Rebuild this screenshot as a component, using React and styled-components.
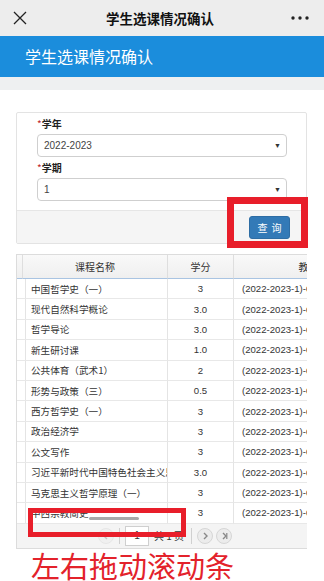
import React from 'react';
import styled, { createGlobalStyle } from 'styled-components';

const GlobalStyle = createGlobalStyle`
  html, body {
    margin: 0;
    padding: 0;
    background: #ffffff;
  }
  body {
    font-family: "Liberation Sans", "Noto Sans CJK SC", sans-serif;
    width: 324px;
    height: 581px;
    overflow: hidden;
  }
  * { box-sizing: border-box; }
`;

const TopBar = styled.div`
  height: 36px;
  background: #ededed;
  display: flex;
  align-items: center;
  justify-content: space-between;
  padding: 0 14px 0 10px;
`;

const TopTitle = styled.div`
  font-size: 13.5px;
  font-weight: bold;
  color: #111;
  font-family: "Noto Sans CJK SC", sans-serif;
`;

const IconBox = styled.div`
  width: 20px;
  height: 20px;
  display: flex;
  align-items: center;
  justify-content: center;
`;

const Banner = styled.div`
  height: 41px;
  background: #1b8ddc;
  color: #fff;
  font-size: 16px;
  font-family: "Noto Sans CJK SC", sans-serif;
  display: flex;
  align-items: center;
  padding-left: 25px;
  padding-bottom: 1px;
`;

const Strip = styled.div`
  height: 13px;
  background: #eef0f1;
`;

const Content = styled.div`
  padding: 22px 17px 0 16px;
`;

const Card = styled.div`
  position: relative;
  border: 1px solid #e3e3e3;
  border-radius: 2px;
`;

const CardBody = styled.div`
  padding: 0 19px 9px 20px;
  display: flex;
  flex-direction: column;
`;

const Label = styled.div`
  font-size: 10px;
  font-weight: bold;
  color: #222;
  height: 21px;
  line-height: 21px;
  font-family: "Noto Sans CJK SC", sans-serif;
`;

const Star = styled.span`
  color: #c0262c;
  font-weight: normal;
`;

const Select = styled.div`
  height: 23px;
  border: 1px solid #cfcfcf;
  border-radius: 4px;
  display: flex;
  align-items: center;
  justify-content: space-between;
  padding: 0 5px 0 6px;
  font-size: 10px;
  color: #444;
`;

const Arrow = styled.span`
  font-size: 7px;
  color: #333;
`;

const CardFooter = styled.div`
  height: 33px;
  background: #f5f5f5;
  border-top: 1px solid #e6e6e6;
  display: flex;
  align-items: center;
  justify-content: flex-end;
  padding-right: 16px;
`;

const QueryButton = styled.button`
  width: 41px;
  height: 23px;
  background: #337ab7;
  border: 1px solid #2e6da4;
  border-radius: 3px;
  color: #fff;
  font-size: 10px;
  letter-spacing: 4px;
  padding: 0 0 0 4px;
  font-family: "Noto Sans CJK SC", sans-serif;
`;

const Mark = styled.div`
  position: absolute;
  border: ${({ $w }) => $w}px solid #e81e2a;
  pointer-events: none;
`;

const Panel = styled.div`
  position: relative;
  margin-top: 10px;
  border: 1px solid #dcdcdc;
  border-right: none;
  overflow: hidden;
`;

const Grid = styled.div`
  display: grid;
  grid-template-columns: 6px 145px 66px 160px;
  width: 377px;
`;

const Head = styled.div`
  height: 24px;
  background: linear-gradient(#f9f9f9, #efefef);
  border-right: 1px solid #dedede;
  border-bottom: 1px solid #a9c4e2;
  display: flex;
  align-items: center;
  justify-content: center;
  font-size: 10px;
  color: #333;
  font-family: "Noto Sans CJK SC", sans-serif;
  white-space: nowrap;
`;

const Cell = styled.div`
  height: 20.4px;
  border-right: 1px solid #e4e4e4;
  border-bottom: 1px solid #e8e8e8;
  display: flex;
  align-items: center;
  justify-content: ${({ $center }) => ($center ? 'center' : 'flex-start')};
  padding-left: ${({ $center }) => ($center ? '0' : '8px')};
  font-size: 9.6px;
  color: #333;
  white-space: nowrap;
  overflow: hidden;
  font-family: "Noto Sans CJK SC", sans-serif;
`;

const NumText = styled.span`
  font-family: "Liberation Sans", sans-serif;
`;

const Thumb = styled.div`
  position: absolute;
  left: 72px;
  top: 262px;
  width: 50px;
  height: 3px;
  border-radius: 2px;
  background: #a9a9a9;
`;

const Pager = styled.div`
  height: 24px;
  background: #f4f4f4;
  display: flex;
  align-items: center;
  padding-left: 81px;
  gap: 3px;
`;

const Circle = styled.div`
  width: 16px;
  height: 16px;
  border-radius: 50%;
  border: 1px solid #d6d6d6;
  background: #ececec;
  display: flex;
  align-items: center;
  justify-content: center;
  opacity: ${({ $off }) => ($off ? 0.45 : 1)};
`;

const Sep = styled.div`
  width: 1px;
  height: 16px;
  background: #d0d0d0;
  margin: 0 2px;
`;

const PageInput = styled.div`
  width: 24px;
  height: 20px;
  border: 1px solid #cfcfcf;
  background: #fff;
  font-size: 10px;
  color: #333;
  display: flex;
  align-items: center;
  justify-content: center;
`;

const PageText = styled.span`
  font-size: 10px;
  color: #333;
  margin: 0 2px;
  font-family: "Noto Sans CJK SC", sans-serif;
`;

const Note = styled.div`
  color: #e3222b;
  font-size: 29px;
  line-height: 34px;
  padding-left: 31px;
  margin-top: -1px;
  font-family: "Noto Sans CJK SC", sans-serif;
`;

const rows = [
  ['中国哲学史（一）', '3'],
  ['现代自然科学概论', '3.0'],
  ['哲学导论', '3.0'],
  ['新生研讨课', '1.0'],
  ['公共体育（武术1）', '2'],
  ['形势与政策（三）', '0.5'],
  ['西方哲学史（一）', '3'],
  ['政治经济学', '3'],
  ['公文写作', '3'],
  ['习近平新时代中国特色社会主义思想概论', '3.0'],
  ['马克思主义哲学原理（一）', '3'],
  ['中西宗教简史', '3'],
];

const Chev = ({ dir = 'right', bar }) => (
  <svg width="8" height="8" viewBox="0 0 8 8">
    {dir === 'left' ? (
      <path d="M5 1 L2 4 L5 7" fill="none" stroke="#888" strokeWidth="1.4" />
    ) : (
      <path d="M3 1 L6 4 L3 7" fill="none" stroke="#888" strokeWidth="1.4" />
    )}
    {bar && <path d="M6.8 1 V7" stroke="#888" strokeWidth="1.2" />}
  </svg>
);

export default function App() {
  return (
    <>
      <GlobalStyle />
      <TopBar>
        <IconBox>
          <svg width="14" height="14" viewBox="0 0 14 14">
            <path d="M1 1 L13 13 M13 1 L1 13" stroke="#222" strokeWidth="1.3" />
          </svg>
        </IconBox>
        <TopTitle>学生选课情况确认</TopTitle>
        <IconBox>
          <svg width="18" height="4" viewBox="0 0 18 4">
            <circle cx="2" cy="2" r="1.7" fill="#222" />
            <circle cx="9" cy="2" r="1.7" fill="#222" />
            <circle cx="16" cy="2" r="1.7" fill="#222" />
          </svg>
        </IconBox>
      </TopBar>
      <Banner>学生选课情况确认</Banner>
      <Strip />
      <Content>
        <Card>
          <CardBody>
            <Label><Star>*</Star>学年</Label>
            <Select>
              <span>2022-2023</span>
              <Arrow>▼</Arrow>
            </Select>
            <Label><Star>*</Star>学期</Label>
            <Select>
              <span>1</span>
              <Arrow>▼</Arrow>
            </Select>
          </CardBody>
          <CardFooter>
            <QueryButton>查询</QueryButton>
          </CardFooter>
          <Mark $w={7} style={{ left: 210, top: 84, width: 81, height: 51 }} />
        </Card>

        <Panel>
          <Grid>
            <Head />
            <Head>课程名称</Head>
            <Head>学分</Head>
            <Head>教学班</Head>
            {rows.map(([name, credit]) => (
              <React.Fragment key={name}>
                <Cell />
                <Cell>{name}</Cell>
                <Cell $center><NumText>{credit}</NumText></Cell>
                <Cell><NumText>(2022-2023-1)-05001</NumText></Cell>
              </React.Fragment>
            ))}
          </Grid>
          <Thumb />
          <Pager>
            <Circle $off><Chev dir="left" /></Circle>
            <Sep />
            <PageInput>1</PageInput>
            <PageText>共 1 页</PageText>
            <Sep />
            <Circle><Chev /></Circle>
            <Circle><Chev bar /></Circle>
          </Pager>
          <Mark $w={5} style={{ left: 11, top: 253, width: 158, height: 29 }} />
        </Panel>
      </Content>
      <Note>左右拖动滚动条</Note>
    </>
  );
}
